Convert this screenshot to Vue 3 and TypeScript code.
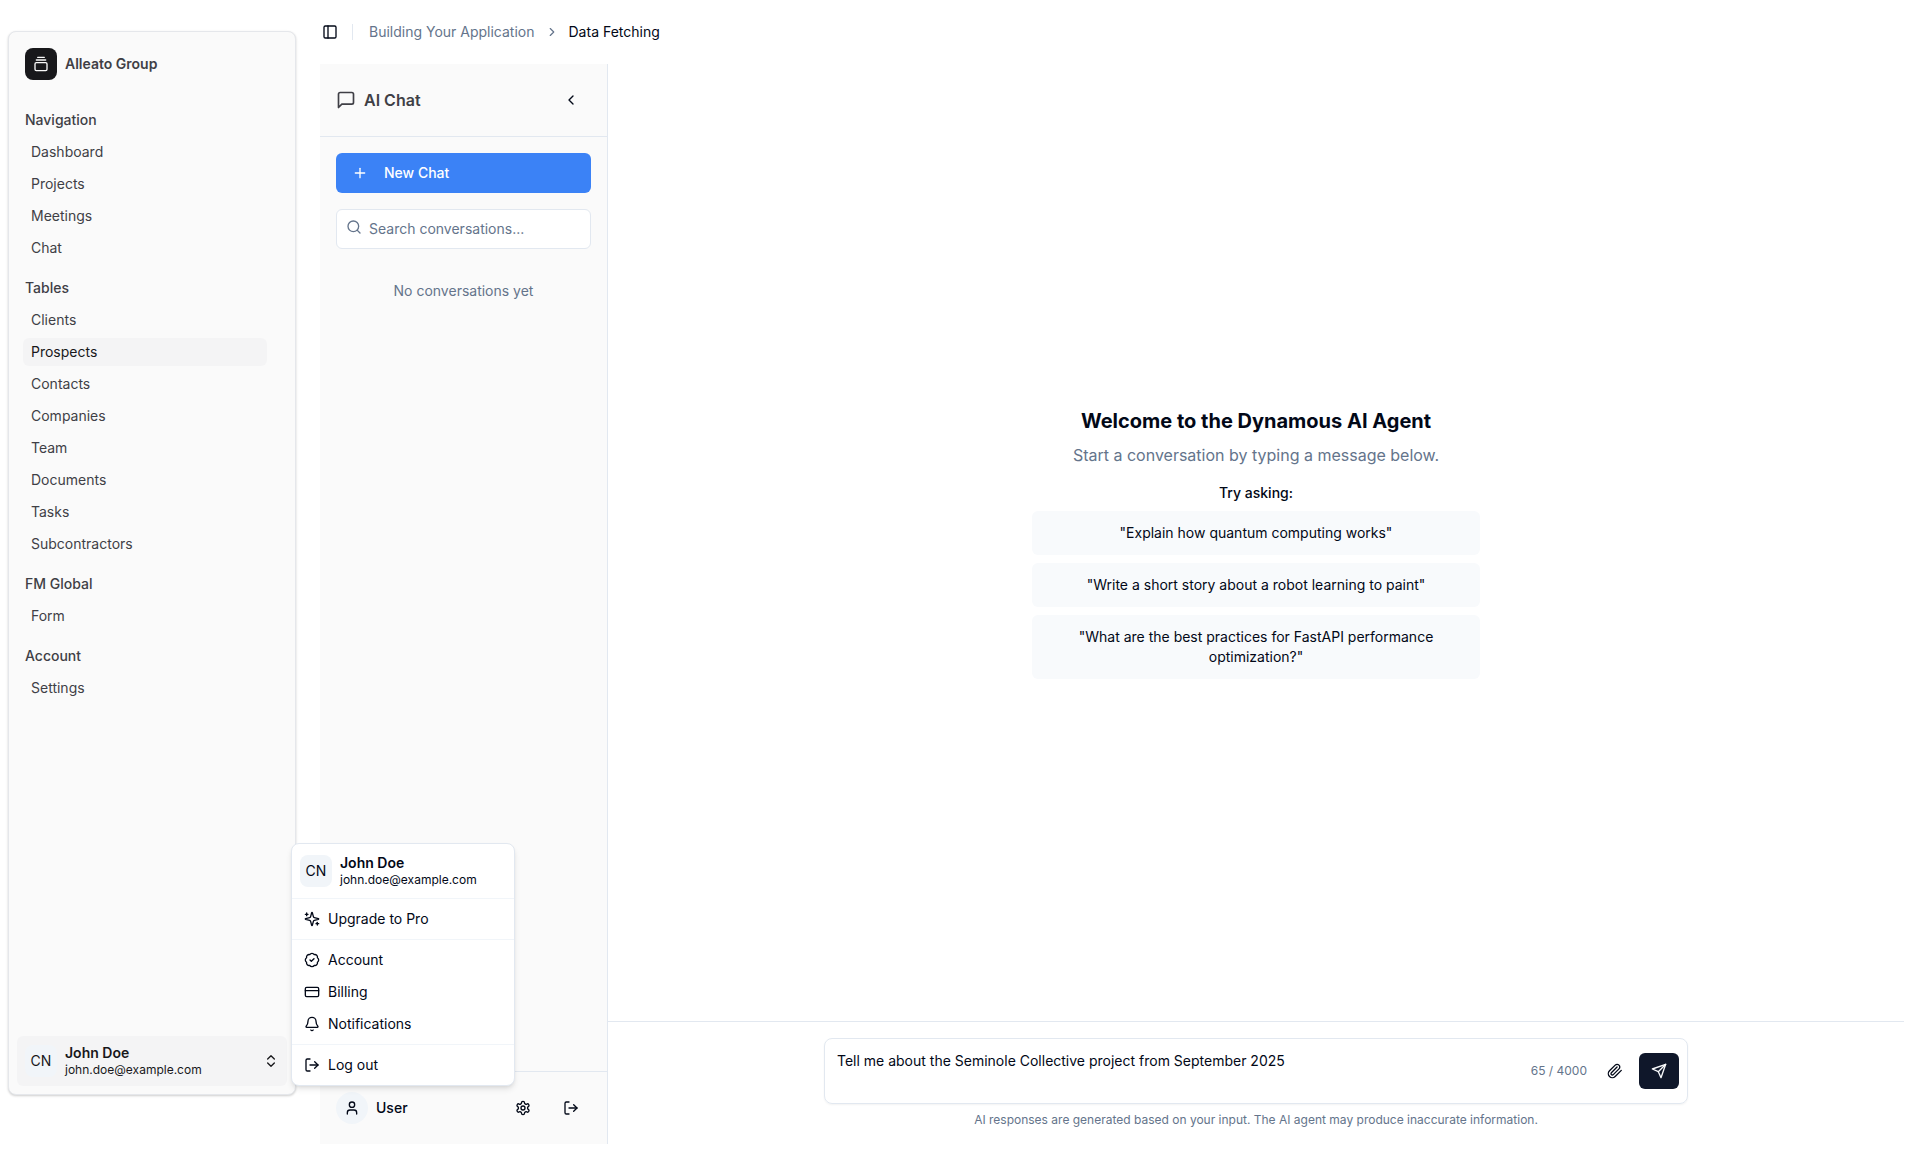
<script setup lang="ts">
import { ref, computed, h, type FunctionalComponent } from 'vue'

type Shape = [string, Record<string, string | number>]

const path = (d: string): Shape => ['path', { d }]

const icons: Record<string, Shape[]> = {
  gallery: [
    path('M7 2h10'),
    path('M5 6h14'),
    ['rect', { width: 18, height: 12, x: 3, y: 10, rx: 2 }],
  ],
  panel: [['rect', { width: 18, height: 18, x: 3, y: 3, rx: 2 }], path('M9 3v18')],
  chevronRight: [path('m9 18 6-6-6-6')],
  chevronLeft: [path('m15 18-6-6 6-6')],
  chevronsUpDown: [path('m7 15 5 5 5-5'), path('m7 9 5-5 5 5')],
  message: [path('M21 15a2 2 0 0 1-2 2H7l-4 4V5a2 2 0 0 1 2-2h14a2 2 0 0 1 2 2z')],
  plus: [path('M5 12h14'), path('M12 5v14')],
  search: [['circle', { cx: 11, cy: 11, r: 8 }], path('m21 21-4.3-4.3')],
  user: [path('M19 21v-2a4 4 0 0 0-4-4H9a4 4 0 0 0-4 4v2'), ['circle', { cx: 12, cy: 7, r: 4 }]],
  settings: [
    path(
      'M12.22 2h-.44a2 2 0 0 0-2 2v.18a2 2 0 0 1-1 1.73l-.43.25a2 2 0 0 1-2 0l-.15-.08a2 2 0 0 0-2.73.73l-.22.38a2 2 0 0 0 .73 2.73l.15.1a2 2 0 0 1 1 1.72v.51a2 2 0 0 1-1 1.74l-.15.09a2 2 0 0 0-.73 2.73l.22.38a2 2 0 0 0 2.73.73l.15-.08a2 2 0 0 1 2 0l.43.25a2 2 0 0 1 1 1.73V20a2 2 0 0 0 2 2h.44a2 2 0 0 0 2-2v-.18a2 2 0 0 1 1-1.73l.43-.25a2 2 0 0 1 2 0l.15.08a2 2 0 0 0 2.73-.73l.22-.39a2 2 0 0 0-.73-2.73l-.15-.08a2 2 0 0 1-1-1.74v-.5a2 2 0 0 1 1-1.74l.15-.09a2 2 0 0 0 .73-2.73l-.22-.38a2 2 0 0 0-2.73-.73l-.15.08a2 2 0 0 1-2 0l-.43-.25a2 2 0 0 1-1-1.73V4a2 2 0 0 0-2-2z',
    ),
    ['circle', { cx: 12, cy: 12, r: 3 }],
  ],
  logout: [path('m16 17 5-5-5-5'), path('M21 12H9'), path('M9 21H5a2 2 0 0 1-2-2V5a2 2 0 0 1 2-2h4')],
  sparkles: [
    path(
      'M9.937 15.5A2 2 0 0 0 8.5 14.063l-6.135-1.582a.5.5 0 0 1 0-.962L8.5 9.936A2 2 0 0 0 9.937 8.5l1.582-6.135a.5.5 0 0 1 .963 0L14.063 8.5A2 2 0 0 0 15.5 9.937l6.135 1.581a.5.5 0 0 1 0 .964L15.5 14.063a2 2 0 0 0-1.437 1.437l-1.582 6.135a.5.5 0 0 1-.963 0z',
    ),
    path('M20 17v4'),
    path('M22 19h-4'),
    path('M4 3v4'),
    path('M6 5H2'),
  ],
  badgeCheck: [
    path(
      'M3.85 8.62a4 4 0 0 1 4.78-4.77 4 4 0 0 1 6.74 0 4 4 0 0 1 4.78 4.78 4 4 0 0 1 0 6.74 4 4 0 0 1-4.77 4.78 4 4 0 0 1-6.75 0 4 4 0 0 1-4.78-4.77 4 4 0 0 1 0-6.76Z',
    ),
    path('m9 12 2 2 4-4'),
  ],
  card: [['rect', { width: 20, height: 14, x: 2, y: 5, rx: 2 }], path('M2 10h20')],
  bell: [
    path('M10.268 21a2 2 0 0 0 3.464 0'),
    path(
      'M3.262 15.326A1 1 0 0 0 4 17h16a1 1 0 0 0 .74-1.673C19.41 13.956 18 12.499 18 8A6 6 0 0 0 6 8c0 4.499-1.411 5.956-2.738 7.326',
    ),
  ],
  paperclip: [
    path(
      'm21.44 11.05-9.19 9.19a6 6 0 0 1-8.49-8.49l8.57-8.57A4 4 0 1 1 18 8.84l-8.59 8.57a2 2 0 0 1-2.83-2.83l8.49-8.48',
    ),
  ],
  send: [path('m22 2-7 20-4-9-9-4Z'), path('M22 2 11 13')],
}

const Icon: FunctionalComponent<{ name: string; size?: number }> = (props) =>
  h(
    'svg',
    {
      width: props.size ?? 16,
      height: props.size ?? 16,
      viewBox: '0 0 24 24',
      fill: 'none',
      stroke: 'currentColor',
      'stroke-width': 2,
      'stroke-linecap': 'round',
      'stroke-linejoin': 'round',
      'aria-hidden': 'true',
    },
    icons[props.name].map(([tag, attrs]) => h(tag, attrs)),
  )
Icon.props = ['name', 'size']

const groups = [
  { title: 'Navigation', items: ['Dashboard', 'Projects', 'Meetings', 'Chat'] },
  {
    title: 'Tables',
    items: ['Clients', 'Prospects', 'Contacts', 'Companies', 'Team', 'Documents', 'Tasks', 'Subcontractors'],
  },
  { title: 'FM Global', items: ['Form'] },
  { title: 'Account', items: ['Settings'] },
]

const menuSections = [
  [{ icon: 'sparkles', label: 'Upgrade to Pro' }],
  [
    { icon: 'badgeCheck', label: 'Account' },
    { icon: 'card', label: 'Billing' },
    { icon: 'bell', label: 'Notifications' },
  ],
  [{ icon: 'logout', label: 'Log out' }],
]

const suggestions = [
  '"Explain how quantum computing works"',
  '"Write a short story about a robot learning to paint"',
  '"What are the best practices for FastAPI performance optimization?"',
]

const current = ref('Prospects')
const menuOpen = ref(true)
const query = ref('')
const limit = 4000
const message = ref('Tell me about the Seminole Collective project from September 2025')
const count = computed(() => message.value.length)
</script>

<template>
  <div class="app">
    <aside class="sidebar">
      <a class="brand" href="#">
        <span class="logo"><Icon name="gallery" /></span>
        <span class="strong">Alleato Group</span>
      </a>

      <nav class="nav">
        <section v-for="group in groups" :key="group.title" class="group">
          <h2 class="group-title">{{ group.title }}</h2>
          <ul class="links">
            <li v-for="item in group.items" :key="item">
              <a href="#" class="link" :class="{ active: item === current }" @click.prevent="current = item">{{ item }}</a>
            </li>
          </ul>
        </section>
      </nav>

      <div class="account">
        <button class="account-button" type="button" :aria-expanded="menuOpen" @click="menuOpen = !menuOpen">
          <span class="initials">CN</span>
          <span class="identity">
            <span class="strong">John Doe</span>
            <span class="email">john.doe@example.com</span>
          </span>
          <Icon name="chevronsUpDown" />
        </button>

        <div v-if="menuOpen" class="menu" role="menu">
          <div class="menu-head">
            <span class="initials">CN</span>
            <span class="identity">
              <span class="strong">John Doe</span>
              <span class="email">john.doe@example.com</span>
            </span>
          </div>
          <div v-for="(section, i) in menuSections" :key="i" class="menu-section">
            <button v-for="entry in section" :key="entry.label" class="menu-item" type="button" role="menuitem">
              <Icon :name="entry.icon" />{{ entry.label }}
            </button>
          </div>
        </div>
      </div>
    </aside>

    <div class="page">
      <header class="topbar">
        <button class="toggle" type="button" aria-label="Toggle sidebar"><Icon name="panel" /></button>
        <span class="divider"></span>
        <nav class="crumbs" aria-label="Breadcrumb">
          <a href="#">Building Your Application</a>
          <Icon name="chevronRight" :size="14" />
          <span class="crumb-current">Data Fetching</span>
        </nav>
      </header>

      <div class="workspace">
        <aside class="panel">
          <div class="panel-head">
            <h1 class="panel-title"><Icon name="message" :size="20" />AI Chat</h1>
            <button class="icon-button" type="button" aria-label="Collapse panel"><Icon name="chevronLeft" /></button>
          </div>
          <div class="panel-tools">
            <button class="new-chat" type="button"><Icon name="plus" />New Chat</button>
            <label class="search">
              <Icon name="search" class="search-icon" />
              <input v-model="query" type="text" placeholder="Search conversations..." aria-label="Search conversations" />
            </label>
          </div>
          <p class="empty">No conversations yet</p>
          <footer class="panel-foot">
            <span class="user-badge"><Icon name="user" /></span>
            <span class="user-name">User</span>
            <button class="icon-button" type="button" aria-label="Settings"><Icon name="settings" /></button>
            <button class="icon-button" type="button" aria-label="Sign out"><Icon name="logout" /></button>
          </footer>
        </aside>

        <main class="chat">
          <div class="welcome">
            <h2>Welcome to the Dynamous AI Agent</h2>
            <p class="lead">Start a conversation by typing a message below.</p>
            <p class="ask">Try asking:</p>
            <button v-for="text in suggestions" :key="text" class="suggestion" type="button" @click="message = text">
              {{ text }}
            </button>
          </div>

          <form class="composer" @submit.prevent>
            <div class="composer-box">
              <textarea v-model="message" rows="2" :maxlength="limit" aria-label="Message"></textarea>
              <span class="count">{{ count }} / {{ limit }}</span>
              <button class="attach" type="button" aria-label="Attach file"><Icon name="paperclip" /></button>
              <button class="send" type="submit" aria-label="Send"><Icon name="send" /></button>
            </div>
            <p class="note">AI responses are generated based on your input. The AI agent may produce inaccurate information.</p>
          </form>
        </main>
      </div>
    </div>
  </div>
</template>

<style>
body {
  margin: 0;
  background: #fff;
}
</style>

<style scoped>
.app,
.app * {
  box-sizing: border-box;
}
.app {
  display: flex;
  height: 100vh;
  overflow: hidden;
  font: 14px/20px Inter, 'Liberation Sans', sans-serif;
  color: #020817;
}
h1,
h2,
p,
ul {
  margin: 0;
  padding: 0;
}
ul {
  list-style: none;
}
button,
input,
textarea {
  margin: 0;
  padding: 0;
  border: 0;
  background: none;
  font: inherit;
  color: inherit;
}
button {
  cursor: pointer;
}
a {
  color: inherit;
  text-decoration: none;
}
svg {
  display: block;
  flex: none;
}
.strong {
  font-weight: 600;
}

/* Sidebar */
.sidebar {
  display: flex;
  flex-direction: column;
  flex: none;
  width: 288px;
  margin: 31px 0 65px 8px;
  padding: 8px;
  border: 1px solid #e5e7eb;
  border-radius: 8px;
  background: #fafafa;
  color: #3f3f46;
  box-shadow: 0 1px 3px rgb(0 0 0 / 10%), 0 1px 2px rgb(0 0 0 / 10%);
}
.brand {
  display: flex;
  align-items: center;
  gap: 8px;
  padding: 8px;
}
.logo {
  display: grid;
  place-items: center;
  width: 32px;
  height: 32px;
  border-radius: 8px;
  background: #18181b;
  color: #fafafa;
}
.nav {
  display: flex;
  flex-direction: column;
  flex: 1;
  gap: 8px;
  padding-top: 16px;
}
.group-title {
  padding: 6px 8px;
  font-size: 14px;
  line-height: 20px;
  font-weight: 500;
}
.links {
  display: flex;
  flex-direction: column;
  gap: 4px;
  padding: 2px 20px 2px 6px;
}
.link {
  display: block;
  padding: 4px 8px;
  border-radius: 6px;
}
.link.active {
  background: #f4f4f5;
  color: #18181b;
}
.account {
  position: relative;
}
.account-button {
  display: flex;
  align-items: center;
  gap: 8px;
  width: 100%;
  padding: 8px;
  border-radius: 6px;
  background: #f4f4f5;
  color: #18181b;
  text-align: left;
}
.initials {
  display: grid;
  place-items: center;
  flex: none;
  width: 32px;
  height: 32px;
  border-radius: 8px;
  background: #f1f5f9;
}
.identity {
  display: flex;
  flex: 1;
  flex-direction: column;
  line-height: 18px;
}
.email {
  font-size: 12px;
  line-height: 16px;
}
.menu {
  position: absolute;
  left: 100%;
  bottom: 0;
  z-index: 10;
  width: 224px;
  margin-left: 4px;
  padding: 4px;
  border: 1px solid #e2e8f0;
  border-radius: 8px;
  background: #fff;
  color: #020817;
  box-shadow: 0 4px 6px -1px rgb(0 0 0 / 10%), 0 2px 4px -2px rgb(0 0 0 / 10%);
}
.menu-head {
  display: flex;
  align-items: center;
  gap: 8px;
  padding: 6px 4px;
}
.menu-section {
  margin: 4px -4px 0;
  padding: 4px 4px 0;
  border-top: 1px solid #f1f5f9;
}
.menu-item {
  display: flex;
  align-items: center;
  gap: 8px;
  width: 100%;
  padding: 6px 8px;
  border-radius: 4px;
  text-align: left;
}

/* Page */
.page {
  display: flex;
  flex: 1;
  flex-direction: column;
  min-width: 0;
  padding: 0 16px 16px 24px;
}
.topbar {
  display: flex;
  align-items: center;
  flex: none;
  height: 64px;
}
.toggle {
  display: grid;
  place-items: center;
  width: 28px;
  height: 28px;
  margin-left: -4px;
}
.divider {
  width: 1px;
  height: 16px;
  margin: 0 16px 0 8px;
  background: #e2e8f0;
}
.crumbs {
  display: flex;
  align-items: center;
  gap: 10px;
  color: #64748b;
}
.crumb-current {
  color: #020817;
}
.workspace {
  display: flex;
  flex: 1;
  min-height: 0;
}

/* Conversation panel */
.panel {
  display: flex;
  flex-direction: column;
  flex: none;
  width: 288px;
  border-right: 1px solid #e2e8f0;
  background: #fafafa;
}
.panel-head {
  display: flex;
  align-items: center;
  justify-content: space-between;
  padding: 16px;
  border-bottom: 1px solid #e2e8f0;
}
.panel-title {
  display: flex;
  align-items: center;
  gap: 8px;
  font-size: 16px;
  line-height: 24px;
  font-weight: 600;
  color: #3f3f46;
}
.icon-button {
  display: grid;
  place-items: center;
  width: 40px;
  height: 40px;
}
.panel-tools {
  display: flex;
  flex-direction: column;
  gap: 16px;
  padding: 16px;
}
.new-chat {
  display: flex;
  align-items: center;
  gap: 16px;
  height: 40px;
  padding: 0 16px;
  border-radius: 6px;
  background: #3b82f6;
  color: #fff;
  font-weight: 500;
}
.search {
  position: relative;
  display: flex;
  height: 40px;
  border: 1px solid #e2e8f0;
  border-radius: 6px;
  background: #fff;
  color: #64748b;
}
.search-icon {
  position: absolute;
  top: 9px;
  left: 9px;
  pointer-events: none;
}
.search input {
  flex: 1;
  min-width: 0;
  padding: 0 12px 0 32px;
  outline: none;
  color: #020817;
}
.search input::placeholder {
  color: #64748b;
  opacity: 1;
}
.empty {
  flex: 1;
  padding: 16px;
  text-align: center;
  color: #64748b;
}
.panel-foot {
  display: flex;
  align-items: center;
  gap: 8px;
  padding: 16px;
  border-top: 1px solid #e2e8f0;
}
.user-badge {
  display: grid;
  place-items: center;
  width: 32px;
  height: 32px;
  border-radius: 50%;
  background: #f1f5f9;
}
.user-name {
  flex: 1;
  font-weight: 500;
}

/* Chat */
.chat {
  display: flex;
  flex: 1;
  flex-direction: column;
  min-width: 0;
}
.welcome {
  display: flex;
  flex: 1;
  flex-direction: column;
  align-self: center;
  justify-content: center;
  gap: 8px;
  width: 100%;
  max-width: 448px;
  text-align: center;
}
.welcome h2 {
  font-size: 20px;
  line-height: 28px;
  font-weight: 700;
}
.lead {
  font-size: 16px;
  line-height: 24px;
  color: #64748b;
}
.ask {
  margin-top: 8px;
  font-weight: 500;
}
.suggestion {
  padding: 12px;
  border-radius: 6px;
  background: #f8fafc;
}
.composer {
  display: flex;
  flex-direction: column;
  align-items: center;
  gap: 8px;
  padding: 16px;
  border-top: 1px solid #e2e8f0;
}
.composer-box {
  display: flex;
  align-items: center;
  width: 100%;
  max-width: 864px;
  padding-right: 8px;
  border: 1px solid #e2e8f0;
  border-radius: 8px;
  box-shadow: 0 1px 2px rgb(0 0 0 / 5%);
}
.composer-box textarea {
  display: block;
  flex: 1;
  height: 64px;
  padding: 12px;
  outline: none;
  resize: none;
}
.count,
.note {
  font-size: 12px;
  line-height: 16px;
  color: #64748b;
}
.attach {
  display: grid;
  place-items: center;
  width: 32px;
  height: 32px;
  margin: 0 8px 0 12px;
}
.send {
  display: grid;
  place-items: center;
  width: 40px;
  height: 36px;
  border-radius: 6px;
  background: #0f172a;
  color: #f8fafc;
}
</style>
